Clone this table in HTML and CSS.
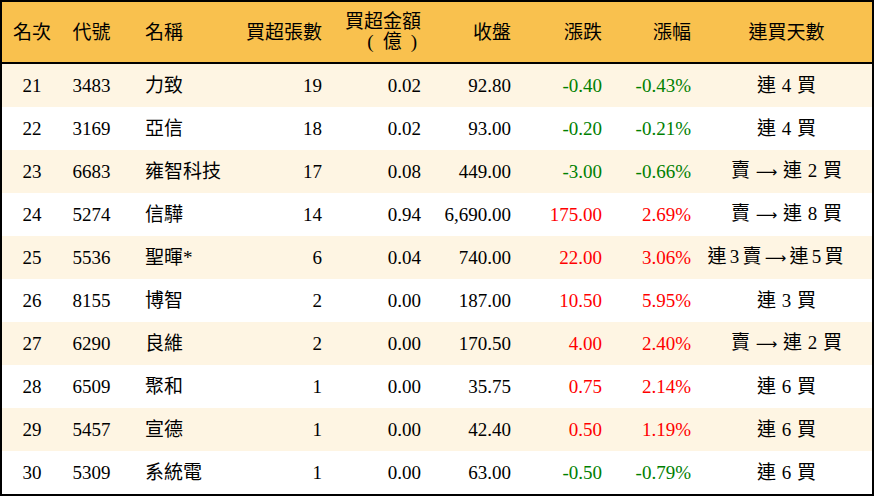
FILE: index.html
```html
<!DOCTYPE html>
<html lang="zh-Hant">
<head>
<meta charset="utf-8">
<link rel="stylesheet" href="styles.css">
</head>
<body>
<div class="frame">
<table class="rank">
<colgroup>
<col class="c1"><col class="c2"><col class="c3"><col class="c4"><col class="c5"><col class="c6"><col class="c7"><col class="c8"><col class="c9">
</colgroup>
<thead>
<tr>
<th class="ctr">名次</th>
<th class="ctr">代號</th>
<th class="name">名稱</th>
<th class="num">買超張數</th>
<th class="num two"><span class="line">買超金額</span><span class="line unit">(<span class="unit-in">億</span>)</span></th>
<th class="num">收盤</th>
<th class="num">漲跌</th>
<th class="num">漲幅</th>
<th class="ctr">連買天數</th>
</tr>
</thead>
<tbody>
<tr><td class="ctr">21</td><td class="ctr">3483</td><td class="name">力致</td><td class="num">19</td><td class="num">0.02</td><td class="num">92.80</td><td class="num down">-0.40</td><td class="num down">-0.43%</td><td class="ctr streak">連 4 買</td></tr>
<tr><td class="ctr">22</td><td class="ctr">3169</td><td class="name">亞信</td><td class="num">18</td><td class="num">0.02</td><td class="num">93.00</td><td class="num down">-0.20</td><td class="num down">-0.21%</td><td class="ctr streak">連 4 買</td></tr>
<tr><td class="ctr">23</td><td class="ctr">6683</td><td class="name">雍智科技</td><td class="num">17</td><td class="num">0.08</td><td class="num">449.00</td><td class="num down">-3.00</td><td class="num down">-0.66%</td><td class="ctr streak">賣 <span class="arr">⟶</span> 連 2 買</td></tr>
<tr><td class="ctr">24</td><td class="ctr">5274</td><td class="name">信驊</td><td class="num">14</td><td class="num">0.94</td><td class="num">6,690.00</td><td class="num up">175.00</td><td class="num up">2.69%</td><td class="ctr streak">賣 <span class="arr">⟶</span> 連 8 買</td></tr>
<tr><td class="ctr">25</td><td class="ctr">5536</td><td class="name">聖暉*</td><td class="num">6</td><td class="num">0.04</td><td class="num">740.00</td><td class="num up">22.00</td><td class="num up">3.06%</td><td class="ctr streak tight">連 3 賣 <span class="arr">⟶</span> 連 5 買</td></tr>
<tr><td class="ctr">26</td><td class="ctr">8155</td><td class="name">博智</td><td class="num">2</td><td class="num">0.00</td><td class="num">187.00</td><td class="num up">10.50</td><td class="num up">5.95%</td><td class="ctr streak">連 3 買</td></tr>
<tr><td class="ctr">27</td><td class="ctr">6290</td><td class="name">良維</td><td class="num">2</td><td class="num">0.00</td><td class="num">170.50</td><td class="num up">4.00</td><td class="num up">2.40%</td><td class="ctr streak">賣 <span class="arr">⟶</span> 連 2 買</td></tr>
<tr><td class="ctr">28</td><td class="ctr">6509</td><td class="name">聚和</td><td class="num">1</td><td class="num">0.00</td><td class="num">35.75</td><td class="num up">0.75</td><td class="num up">2.14%</td><td class="ctr streak">連 6 買</td></tr>
<tr><td class="ctr">29</td><td class="ctr">5457</td><td class="name">宣德</td><td class="num">1</td><td class="num">0.00</td><td class="num">42.40</td><td class="num up">0.50</td><td class="num up">1.19%</td><td class="ctr streak">連 6 買</td></tr>
<tr><td class="ctr">30</td><td class="ctr">5309</td><td class="name">系統電</td><td class="num">1</td><td class="num">0.00</td><td class="num">63.00</td><td class="num down">-0.50</td><td class="num down">-0.79%</td><td class="ctr streak">連 6 買</td></tr>
</tbody>
</table>
</div>
</body>
</html>
```
FILE: styles.css
```css
html, body {
  margin: 0;
  padding: 0;
  background: #ffffff;
}
.frame {
  box-sizing: border-box;
  width: 874px;
  height: 496px;
  border: 2px solid #000000;
  overflow: hidden;
}
.rank {
  width: 870px;
  table-layout: fixed;
  border-collapse: separate;
  border-spacing: 0;
  font-family: "Liberation Serif", "Noto Sans CJK TC", serif;
  font-size: 19px;
  color: #000000;
}
.c1 { width: 60px; }
.c2 { width: 59px; }
.c3 { width: 119px; }
.c4 { width: 92px; }
.c5 { width: 99px; }
.c6 { width: 90px; }
.c7 { width: 91px; }
.c8 { width: 89px; }
.c9 { width: 171px; }
.rank th {
  height: 60px;
  padding: 0;
  background: #f9c14e;
  border-bottom: 2px solid #000000;
  font-weight: normal;
  line-height: 19px;
  white-space: nowrap;
}
.rank th.two {
  line-height: 20px;
}
.line {
  display: block;
}
.unit {
  padding-right: 4px;
}
.unit-in {
  margin: 0 9px;
}
.rank td {
  height: 43px;
  padding: 0;
  line-height: 20px;
  white-space: nowrap;
}
.rank tbody tr:nth-child(odd) td {
  background: #fef5e3;
}
.ctr { text-align: center; }
.name { text-align: left; padding-left: 24px !important; }
.num { text-align: right; padding-right: 10px !important; }
.down { color: #008000; }
.up { color: #ff0000; }
.arr {
  font-family: "DejaVu Sans", sans-serif;
  font-size: 15px;
}
.streak {
  word-spacing: 1px;
}
.streak.tight {
  word-spacing: -1.5px;
  padding-right: 22px;
}
```
